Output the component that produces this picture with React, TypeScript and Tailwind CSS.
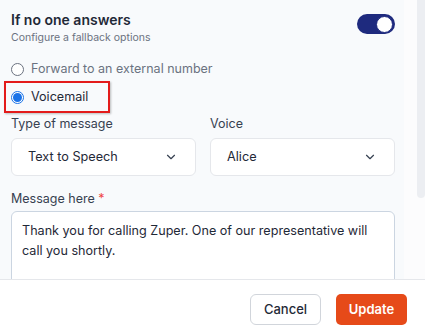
import { ChevronDown } from "lucide-react";

function Radio({ checked }: { checked?: boolean }) {
  return checked ? (
    <span className="flex h-[13px] w-[13px] items-center justify-center rounded-full border border-[#1a73e8] bg-white">
      <span className="h-[9px] w-[9px] rounded-full bg-[#1a73e8]" />
    </span>
  ) : (
    <span className="h-[13px] w-[13px] rounded-full border border-[#6b7280] bg-white" />
  );
}

function Select({ value }: { value: string }) {
  return (
    <div className="flex h-[38px] items-center justify-between rounded-[6px] border border-[#e5e7eb] bg-white pl-[16px] pr-[17px] text-[12.7px] text-[#1f2937]">
      <span>{value}</span>
      <ChevronDown size={14} strokeWidth={2} className="text-[#374151]" />
    </div>
  );
}

export default function App() {
  return (
    <div
      className="flex h-[333px] w-[425px] flex-col overflow-hidden bg-white"
      style={{ fontFamily: "Inter, 'Noto Sans', sans-serif" }}
    >
      <div className="flex h-[279px]">
        {/* Scrollable content */}
        <div className="w-[404px] overflow-hidden bg-[#f8fafc] pl-[11px] pr-[9px] pt-[10px]">
          <div className="flex items-start justify-between">
            <div>
              <h2 className="text-[14px] font-semibold leading-[20px] text-[#1f2937]">If no one answers</h2>
              <p className="text-[10.5px] leading-[16px] text-[#6b7280]">Configure a fallback options</p>
            </div>
            <span className="mt-[4px] flex h-[20px] w-[38px] items-center justify-end rounded-full bg-[#1e2a7e] pr-[2px]">
              <span className="h-[17px] w-[17px] rounded-full border border-[#1e2a7e] bg-white" />
            </span>
          </div>

          <label className="mt-[13px] flex h-[20px] items-center gap-[7px] text-[12.5px] text-[#6b7280]">
            <Radio />
            Forward to an external number
          </label>

          <div className="ml-[-7px] mt-[2px] w-[106px] border-2 border-[#e31b1b] px-[5px] py-[4px] shadow-[1px_1px_2px_rgba(0,0,0,0.25)]">
            <label className="flex h-[20px] items-center gap-[7px] text-[12.6px] text-[#1f2937]">
              <Radio checked />
              Voicemail
            </label>
          </div>

          <div className="mt-[2px] grid grid-cols-2 gap-[14px]">
            <div>
              <p className="mb-[5px] text-[12.5px] leading-[18px] text-[#374151]">Type of message</p>
              <Select value="Text to Speech" />
            </div>
            <div>
              <p className="mb-[5px] text-[12.5px] leading-[18px] text-[#374151]">Voice</p>
              <Select value="Alice" />
            </div>
          </div>

          <p className="mt-[14px] mb-[3px] text-[12.5px] leading-[18px] text-[#374151]">
            Message here <span className="text-[#ef4444]">*</span>
          </p>
          <div className="h-[90px] rounded-[6px] border border-[#cbd5e1] bg-white px-[10px] pt-[9px] text-[12.6px] leading-[20px] text-[#1f2937]">
            Thank you for calling Zuper. One of our representative will call you shortly.
          </div>
        </div>

        {/* Scrollbar */}
        <div className="flex flex-1 justify-end bg-[#fcfcfd]">
          <div className="h-[198px] w-[8px] rounded-b-[4px] bg-[#eceef2]" />
        </div>
      </div>

      <div className="flex flex-1 items-start justify-end gap-[15px] border-t border-[#e5e7eb] pr-[18px] pt-[14px]">
        <button className="h-[31px] w-[71px] rounded-[6px] border border-[#d1d5db] bg-white text-[13px] font-medium text-[#1f2937]">
          Cancel
        </button>
        <button className="h-[31px] w-[71px] rounded-[5px] bg-[#e64a19] text-[13px] font-semibold text-white">
          Update
        </button>
      </div>
    </div>
  );
}
